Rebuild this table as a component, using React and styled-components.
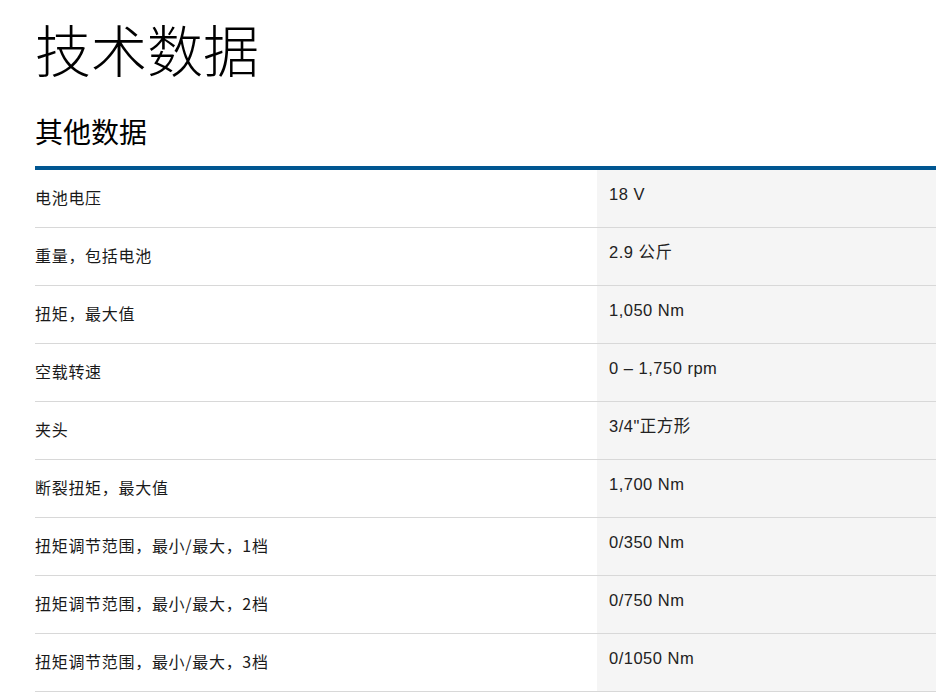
import React from 'react';
import styled, { createGlobalStyle } from 'styled-components';

const GlobalStyle = createGlobalStyle`
  html, body {
    margin: 0;
    padding: 0;
    background: #fff;
    overflow: hidden;
  }
  body {
    font-family: "Liberation Sans", "Noto Sans CJK SC", sans-serif;
    color: #000;
  }
`

const Page = styled.div`
  width: 936px;
  height: 696px;
  box-sizing: border-box;
  padding-left: 35px;
  overflow: hidden;
`

const Title = styled.h1`
  margin: 0;
  padding-top: 10px;
  font-family: "Noto Sans CJK SC", sans-serif;
  font-weight: 300;
  font-size: 56px;
  line-height: 76px;
  color: #000;
`

const SectionTitle = styled.h2`
  margin: 0;
  padding-top: 26px;
  padding-bottom: 16px;
  font-family: "Noto Sans CJK SC", sans-serif;
  font-weight: 400;
  font-size: 28px;
  line-height: 38px;
  color: #000;
  border-bottom: 4px solid #005691;
`

const Table = styled.div`
  display: flex;
  flex-direction: column;
`

const Row = styled.div`
  display: grid;
  grid-template-columns: 562px 1fr;
  height: 58px;
  box-sizing: border-box;
  border-bottom: 1px solid #d8d8d8;
`

const Label = styled.div`
  display: flex;
  align-items: center;
  padding-bottom: 3px;
  font-family: "Noto Sans CJK SC", sans-serif;
  font-size: 16px;
  letter-spacing: 0.7px;
  color: #1a1a1a;
`

const Value = styled.div`
  background: #f5f5f5;
  padding: 15px 12px 0;
  font-family: "Liberation Sans", "Noto Sans CJK SC", sans-serif;
  font-size: 16.5px;
  letter-spacing: 0.5px;
  line-height: 19px;
  color: #222;
`

const specs = [
  ['电池电压', '18 V'],
  ['重量，包括电池', '2.9 公斤'],
  ['扭矩，最大值', '1,050 Nm'],
  ['空载转速', '0 – 1,750 rpm'],
  ['夹头', '3/4"正方形'],
  ['断裂扭矩，最大值', '1,700 Nm'],
  ['扭矩调节范围，最小/最大，1档', '0/350 Nm'],
  ['扭矩调节范围，最小/最大，2档', '0/750 Nm'],
  ['扭矩调节范围，最小/最大，3档', '0/1050 Nm'],
]

function App() {
  return (
    <>
      <GlobalStyle />
      <Page>
        <Title>技术数据</Title>
        <SectionTitle>其他数据</SectionTitle>
        <Table>
          {specs.map(([k, v], i) =>
            <Row key={'spec' + i}>
              <Label>{k}</Label>
              <Value>{v}</Value>
            </Row>
          )}
        </Table>
      </Page>
    </>
  )
}

export default App
